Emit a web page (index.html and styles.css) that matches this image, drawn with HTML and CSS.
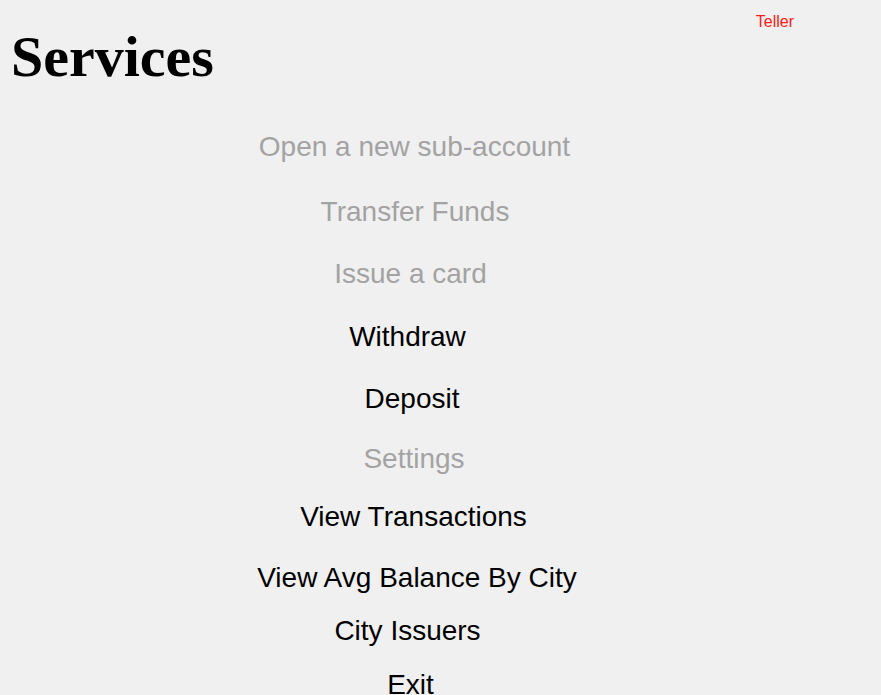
FILE: index.html
```html
<!DOCTYPE html>
<html>
<head>
<meta charset="utf-8">
<title>Services</title>
<link rel="stylesheet" href="styles.css">
</head>
<body>
<header class="header">
  <h1 class="title">Services</h1>
  <span class="role">Teller</span>
</header>
<nav class="menu">
  <span class="item disabled open">Open a new sub-account</span>
  <span class="item disabled transfer">Transfer Funds</span>
  <span class="item disabled issue">Issue a card</span>
  <span class="item withdraw">Withdraw</span>
  <span class="item deposit">Deposit</span>
  <span class="item disabled settings">Settings</span>
  <span class="item transactions">View Transactions</span>
  <span class="item avg">View Avg Balance By City</span>
  <span class="item issuers">City Issuers</span>
  <span class="item exit">Exit</span>
</nav>
</body>
</html>
```
FILE: styles.css
```css
html, body {
  margin: 0;
  padding: 0;
}
body {
  background: #f0f0f0;
  width: 881px;
  height: 695px;
  overflow: hidden;
}
.header {
  display: flex;
  align-items: flex-start;
  padding: 13px 87px 0 11px;
}
.title {
  margin: 12px 0 0;
  font: bold 58px/64px "Liberation Serif", "Times New Roman", serif;
  color: #000;
}
.role {
  margin-left: auto;
  font: 16px/18px "Liberation Sans", Arial, sans-serif;
  color: #ff1a1a;
}
.menu {
  display: flex;
  flex-direction: column;
  align-items: center;
  width: 824px;
  margin-top: 42px;
}
.item {
  display: block;
  font: 28px/32px "Liberation Sans", Arial, sans-serif;
  color: #000;
  white-space: nowrap;
}
.item.disabled {
  color: #a3a3a3;
}
.open { padding-left: 5px; }
.transfer { margin-top: 33px; padding-left: 6px; }
.issue { margin-top: 30px; padding-right: 3px; }
.withdraw { margin-top: 31px; padding-right: 9px; }
.deposit { margin-top: 30px; }
.settings { margin-top: 28px; padding-left: 4px; }
.transactions { margin-top: 26px; padding-left: 3px; }
.avg { margin-top: 29px; padding-left: 10px; }
.issuers { margin-top: 21px; padding-right: 9px; }
.exit { margin-top: 22px; padding-right: 3px; }
```
